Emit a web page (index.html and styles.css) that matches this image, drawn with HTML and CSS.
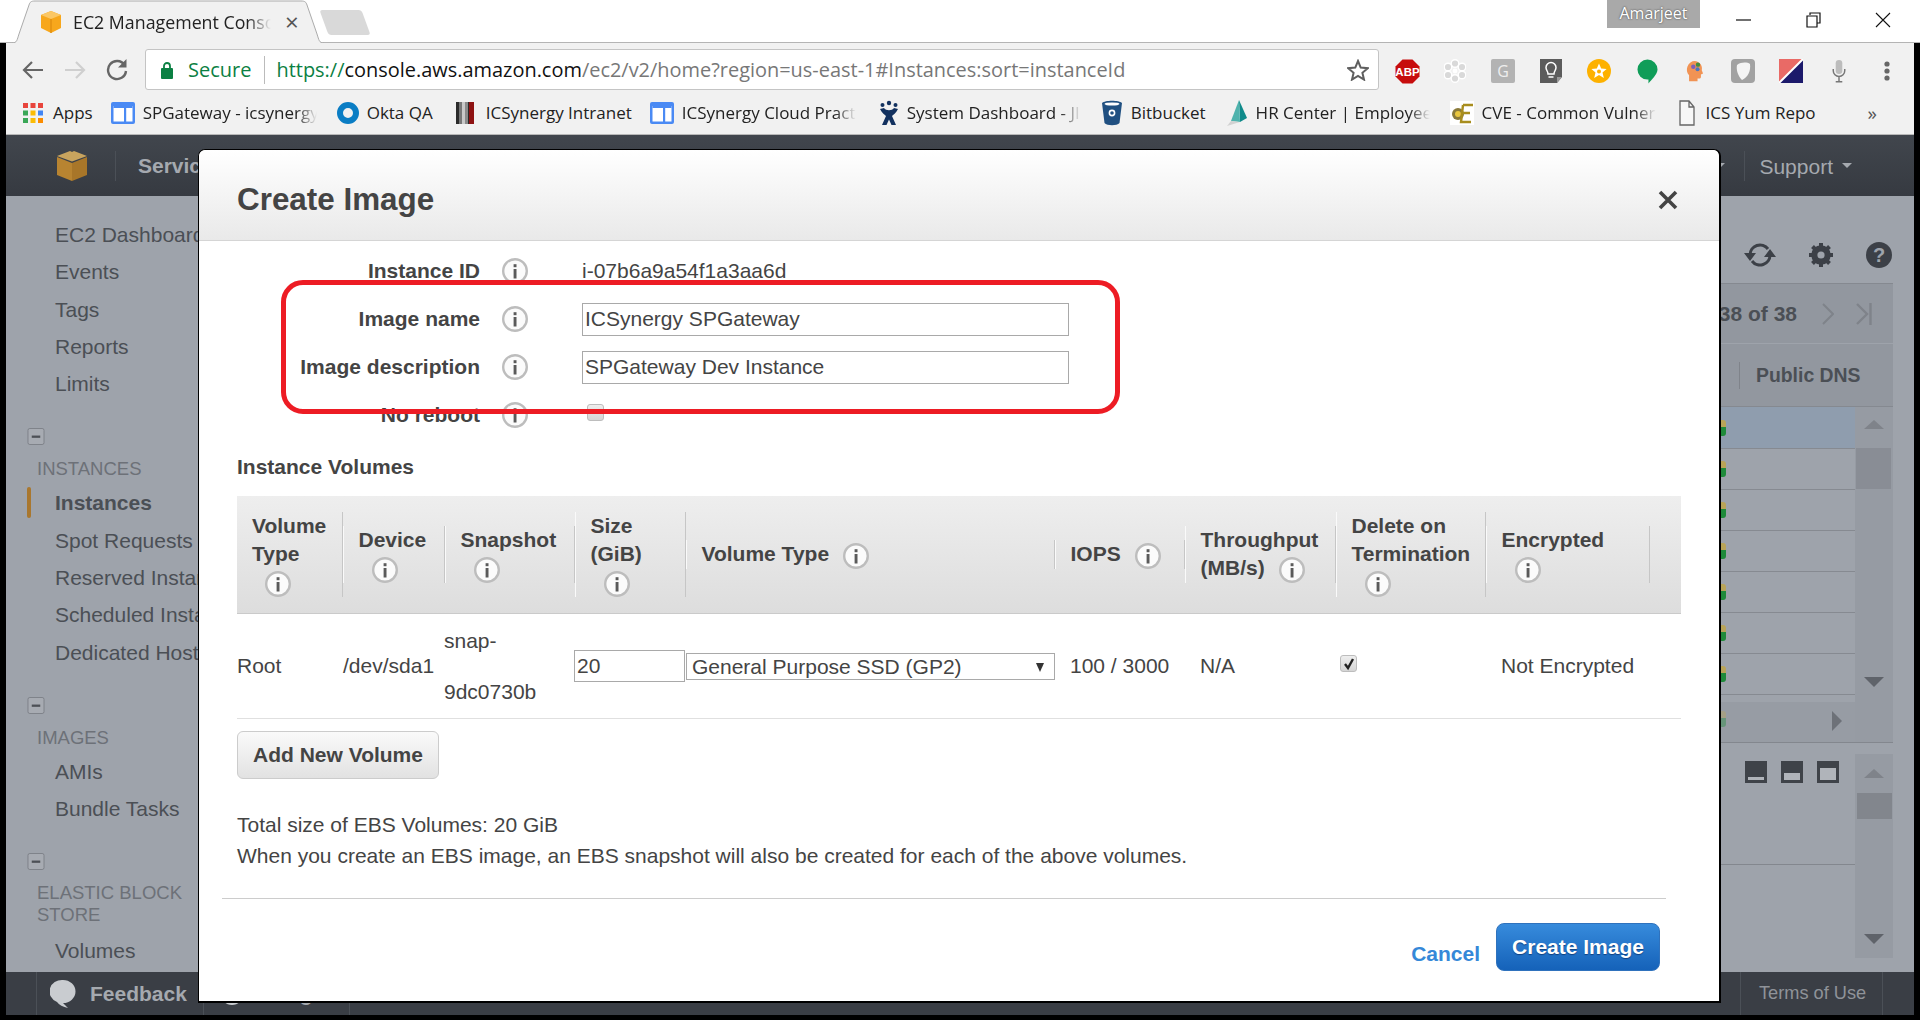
FILE: index.html
```html
<!DOCTYPE html>
<html lang="en">
<head>
    <meta charset="UTF-8">
    <meta name="viewport" content="width=device-width, initial-scale=1.0">
    <title>EC2 Management Console</title>
    <link rel="stylesheet" href="styles.css">
</head>
<body>

    <svg class="sprite" aria-hidden="true">
        <symbol id="info" viewBox="0 0 26 26">
            <circle cx="13" cy="13" r="11.8" fill="#fbfbfb" stroke="#bdbdbd" stroke-width="2.4"/>
            <rect x="11.6" y="11" width="2.9" height="9.5" fill="#5a5a5a"/>
            <rect x="11.6" y="6.2" width="2.9" height="3" fill="#5a5a5a"/>
        </symbol>
        <symbol id="doc" viewBox="0 0 24 24">
            <rect x="0" y="1" width="24" height="22" rx="2" fill="#4a8af4"/>
            <rect x="2.5" y="5" width="19" height="15.5" fill="#fff"/>
            <rect x="13" y="5" width="2.2" height="16" fill="#4a8af4"/>
            <rect x="2.5" y="5" width="19" height="2" fill="#4a8af4"/>
        </symbol>
        <symbol id="minus" viewBox="0 0 18 18">
            <rect x="0.5" y="0.5" width="17" height="17" rx="2" fill="#a7abb2" stroke="#7c8087"/>
            <rect x="4.5" y="8" width="9" height="2.4" fill="#4c5056"/>
        </symbol>
    </svg>

    <!-- browser chrome -->
    <div class="tabstrip">
        <div class="tab">
            <svg class="tab-shape" width="314" height="43" viewBox="0 0 314 43"><path d="M1 43 C6 43 6 40 8 34 L18 5 C19 2 20 1 24 1 L290 1 C294 1 295 2 296 5 L306 34 C308 40 308 43 313 43" fill="#f1f1f1" stroke="#ababab"/></svg>
            <svg class="tab-icon" width="22" height="22" viewBox="0 0 22 22"><path d="M11 0 L21 4 V17 L11 22 L1 17 V4 Z" fill="#f7a71c"/><path d="M1 4 L11 8 L21 4 L11 0 Z" fill="#fbc765"/><path d="M11 8 V22" stroke="#e08f10" stroke-width="1.4"/></svg>
            <span class="tab-title">EC2 Management Consol</span>
            <span class="tab-x">×</span>
        </div>
        <div class="newtab"></div>
        <div class="tab-gap"></div>
        <div class="user">Amarjeet</div>
        <div class="winctl">
            <svg width="16" height="16" viewBox="0 0 16 16"><path d="M0 8 H15" stroke="#111" stroke-width="1.2"/></svg>
            <svg width="16" height="16" viewBox="0 0 16 16"><path d="M4 3 V1 H14 V11 H11 M1 4 H11 V15 H1 Z" fill="none" stroke="#111" stroke-width="1.2"/></svg>
            <svg width="16" height="16" viewBox="0 0 16 16"><path d="M1 1 L15 15 M15 1 L1 15" stroke="#111" stroke-width="1.1"/></svg>
        </div>
    </div>

    <div class="frame">
        <div class="toolbar">
            <div class="navbtn"><svg width="22" height="20" viewBox="0 0 22 20"><path d="M21 10 H3 M10 2 L2 10 L10 18" fill="none" stroke="#666" stroke-width="2.2"/></svg></div>
            <div class="navbtn"><svg width="22" height="20" viewBox="0 0 22 20"><path d="M1 10 H19 M12 2 L20 10 L12 18" fill="none" stroke="#cfcfcf" stroke-width="2.2"/></svg></div>
            <div class="navbtn"><svg width="22" height="24" viewBox="0 0 22 24"><path d="M18.5 7 A9 9 0 1 0 20 13" fill="none" stroke="#666" stroke-width="2.4"/><path d="M20.5 1 V9.5 H12 Z" fill="#666"/></svg></div>
            <div class="omnibox">
                <svg class="lock" width="12" height="18" viewBox="0 0 12 18"><path d="M3 8 V5 A3 3 0 0 1 9 5 V8" fill="none" stroke="#0b8043" stroke-width="1.8"/><rect x="0" y="7" width="12" height="11" rx="1" fill="#0b8043"/></svg>
                <span class="secure">Secure</span>
                <span class="url"><span class="url-https">https://</span><span class="url-host">console.aws.amazon.com</span>/ec2/v2/home?region=us-east-1#Instances:sort=instanceId</span>
                <svg class="star" width="22" height="22" viewBox="0 0 22 22"><path d="M11 2 L13.7 8.6 L20.7 9.2 L15.4 13.8 L17 20.6 L11 17 L5 20.6 L6.6 13.8 L1.3 9.2 L8.3 8.6 Z" fill="none" stroke="#5f5f5f" stroke-width="2"/></svg>
            </div>
            <div class="exts">
                <div class="ext"><svg width="25" height="25" viewBox="0 0 25 25"><path d="M7.5 0.5 H17.5 L24.5 7.5 V17.5 L17.5 24.5 H7.5 L0.5 17.5 V7.5 Z" fill="#c70d0d"/><text x="12.5" y="16.8" text-anchor="middle" class="abp">ABP</text></svg></div>
                <div class="ext"><svg width="22" height="24" viewBox="0 0 22 24"><g fill="#d9d9d9" stroke="#fff" stroke-width="1.4"><circle cx="11" cy="4.5" r="3.8"/><circle cx="11" cy="19.5" r="3.8"/><circle cx="4" cy="8" r="3.8"/><circle cx="18" cy="8" r="3.8"/><circle cx="4" cy="16" r="3.8"/><circle cx="18" cy="16" r="3.8"/></g><circle cx="11" cy="12" r="2.4" fill="#fff"/></svg></div>
                <div class="ext"><div class="ext-g">G</div></div>
                <div class="ext"><svg width="24" height="24" viewBox="0 0 24 24"><path d="M1 0 H23 V18 L18 24 H1 Z" fill="#5c5c5c"/><path d="M23 18 H18 V24 Z" fill="#999"/><path d="M9 15 C9 12 7 11.5 7 8.5 A5 5 0 0 1 17 8.5 C17 11.5 15 12 15 15 Z M9.5 18 H14.5" fill="none" stroke="#fff" stroke-width="1.5"/></svg></div>
                <div class="ext"><svg width="24" height="24" viewBox="0 0 24 24"><circle cx="12" cy="12" r="12" fill="#fdb100"/><path d="M12 4.5 L14.2 9.6 L19.6 10 L15.5 13.6 L16.8 19 L12 16.1 L7.2 19 L8.5 13.6 L4.4 10 L9.8 9.6 Z" fill="#fff"/><circle cx="12" cy="12.5" r="2" fill="#fdb100"/></svg></div>
                <div class="ext"><svg width="21" height="25" viewBox="0 0 22 26"><path d="M11 0.5 A10.5 10.5 0 0 1 21.5 11 C21.5 16 15 22 12 25.5 V21.5 H11 A10.5 10.5 0 0 1 11 0.5 Z" fill="#0f9d58"/></svg></div>
                <div class="ext"><svg width="18" height="22" viewBox="0 0 20 26"><path d="M3 25 V18 C0 15 0 11 1 8 C3 2 9 0 13 2 C17 4 19 8 18 12 L19.5 16 L17 17 V20 C17 22 15 22 13 22 V25 Z" fill="#f19354"/><circle cx="8" cy="8" r="2.6" fill="#7b5fb8"/><circle cx="13.5" cy="5.5" r="2.6" fill="#3f8e3f"/><circle cx="13" cy="11" r="2.4" fill="#4a76c2"/></svg></div>
                <div class="ext"><svg width="24" height="24" viewBox="0 0 24 24"><rect width="24" height="24" rx="4" fill="#a2a2a2"/><path d="M6 6 C10 3 16 3 19 5 C20 12 17 18 11 21 C7 17 5 11 6 6 Z" fill="#f4f4f4"/></svg></div>
                <div class="ext"><svg width="24" height="24" viewBox="0 0 24 24"><rect width="24" height="24" fill="#e96a66"/><path d="M24 0 V24 H0 Z" fill="#1c1a6b"/><path d="M24 0 L0 24" stroke="#fff" stroke-width="2"/></svg></div>
                <div class="ext"><svg width="14" height="23" viewBox="0 0 16 28"><rect x="4" y="0" width="8" height="17" rx="4" fill="#bcbcbc"/><path d="M1 11 V13 A7 7 0 0 0 15 13 V11 M8 20 V26 M4 26.5 H12" fill="none" stroke="#777" stroke-width="1.8"/></svg></div>
                <div class="ext"><svg width="6" height="20" viewBox="0 0 6 20"><circle cx="3" cy="3" r="2.6" fill="#666"/><circle cx="3" cy="10" r="2.6" fill="#666"/><circle cx="3" cy="17" r="2.6" fill="#666"/></svg></div>
            </div>
        </div>

        <div class="bookmarks">
            <div class="bm bm-apps">
                <svg width="20" height="20" viewBox="0 0 20 20"><g><rect width="5" height="5" fill="#e8453c"/><rect x="7.5" width="5" height="5" fill="#e8453c"/><rect x="15" width="5" height="5" fill="#e8453c"/><rect y="7.5" width="5" height="5" fill="#3aa757"/><rect x="7.5" y="7.5" width="5" height="5" fill="#fbbc05"/><rect x="15" y="7.5" width="5" height="5" fill="#4285f4"/><rect y="15" width="5" height="5" fill="#3aa757"/><rect x="7.5" y="15" width="5" height="5" fill="#fbbc05"/><rect x="15" y="15" width="5" height="5" fill="#fb8c00"/></g></svg>
                <span>Apps</span>
            </div>
            <div class="bm"><svg width="24" height="24"><use href="#doc"/></svg><span class="bm-cut">SPGateway - icsynergy</span></div>
            <div class="bm"><svg width="22" height="24" viewBox="0 0 22 24"><circle cx="11" cy="12" r="8" fill="none" stroke="#0a7dc4" stroke-width="6"/></svg><span>Okta QA</span></div>
            <div class="bm bm-intranet"><svg width="18" height="22" viewBox="0 0 18 22"><rect width="18" height="22" fill="#2b2b2b"/><rect x="3" width="3" height="22" fill="#777"/><rect x="6" width="3" height="22" fill="#c9c9c9"/><rect x="9" width="3" height="22" fill="#8b8b8b"/><rect x="13" width="5" height="22" fill="#8e1212"/></svg><span>ICSynergy Intranet</span></div>
            <div class="bm bm-cloud"><svg width="24" height="24"><use href="#doc"/></svg><span class="bm-cut">ICSynergy Cloud Pract</span></div>
            <div class="bm bm-jira"><svg width="20" height="26" viewBox="0 0 20 26"><g fill="#12315f"><circle cx="10" cy="3" r="2.2"/><circle cx="3.5" cy="5" r="2"/><circle cx="16.5" cy="5" r="2"/><path d="M1 9 L5 8 C7 11 13 11 15 8 L19 9 C17 13 14 15 13 16 L17 25 H12.5 L10 19.5 L7.5 25 H3 L7 16 C6 15 3 13 1 9 Z"/></g></svg><span class="bm-cut">System Dashboard - JI</span></div>
            <div class="bm"><svg width="22" height="26" viewBox="0 0 22 26"><path d="M1 3 C4 0 18 0 21 3 L18.5 23 C16 26 6 26 3.5 23 Z" fill="#205081"/><ellipse cx="11" cy="4" rx="7.5" ry="1.6" fill="#fff"/><circle cx="11" cy="13" r="2.6" fill="none" stroke="#fff" stroke-width="1.6"/></svg><span>Bitbucket</span></div>
            <div class="bm"><svg width="22" height="26" viewBox="0 0 22 26"><path d="M13 0 L21 18 L14 22 Z" fill="#0f8a8a"/><path d="M13 0 L5 21 L14 22 Z" fill="#4fb3ad"/><path d="M5 21 L14 22 L1 26 Z" fill="#d2d2d2"/></svg><span class="bm-cut">HR Center | Employee</span></div>
            <div class="bm"><svg width="24" height="24" viewBox="0 0 24 24"><rect width="24" height="24" fill="#fff"/><circle cx="8" cy="13" r="6" fill="#8a7a3a"/><circle cx="8" cy="13" r="3" fill="#e9c63e"/><path d="M13 4 H23 M13 4 L11 21 H21 M12 12 H20" fill="none" stroke="#a88d1e" stroke-width="2.4"/></svg><span class="bm-cut">CVE - Common Vulner</span></div>
            <div class="bm bm-yum"><svg width="16" height="26" viewBox="0 0 16 26"><path d="M1 1 H10 L15 7 V25 H1 Z M10 1 V7 H15" fill="#f7f7f7" stroke="#666" stroke-width="1.3"/></svg><span>ICS Yum Repo</span></div>
            <div class="bm-more">»</div>
        </div>

        <!-- the console behind the dialog -->
        <div class="navbar">
            <svg class="nav-logo" width="30" height="30" viewBox="0 0 30 30"><path d="M0 6 L15 12 V30 L0 24 Z" fill="#b88431"/><path d="M30 6 L15 12 V30 L30 24 Z" fill="#a87629"/><path d="M0 5 L13 0 L15 1 L17 0 L30 5 L15 10.5 Z" fill="#c8a45e"/></svg>
            <div class="nav-sep"></div>
            <div class="nav-services">Services</div>
            <div class="nav-spacer"></div>
            <div class="nav-caret"></div>
            <div class="nav-sep nav-sep-support"></div>
            <div class="nav-support">Support</div>
            <div class="nav-caret"></div>
        </div>

        <div class="console">
            <div class="sidebar">
                <ul class="side-list">
                    <li>EC2 Dashboard</li>
                    <li>Events</li>
                    <li>Tags</li>
                    <li>Reports</li>
                    <li>Limits</li>
                </ul>
                <div class="side-group">
                    <svg width="18" height="18"><use href="#minus"/></svg>
                    <h4>INSTANCES</h4>
                    <ul class="side-list">
                        <li class="active">Instances</li>
                        <li>Spot Requests</li>
                        <li>Reserved Instances</li>
                        <li>Scheduled Instances</li>
                        <li>Dedicated Hosts</li>
                    </ul>
                </div>
                <div class="side-group">
                    <svg width="18" height="18"><use href="#minus"/></svg>
                    <h4>IMAGES</h4>
                    <ul class="side-list">
                        <li>AMIs</li>
                        <li>Bundle Tasks</li>
                    </ul>
                </div>
                <div class="side-group">
                    <svg width="18" height="18"><use href="#minus"/></svg>
                    <h4>ELASTIC BLOCK STORE</h4>
                    <ul class="side-list">
                        <li>Volumes</li>
                    </ul>
                </div>
            </div>

            <div class="main">
                <div class="actions">
                    <svg width="32" height="28" viewBox="0 0 32 28"><path d="M6 14 A10 10 0 0 1 24 8 M26 14 A10 10 0 0 1 8 20" fill="none" stroke="#3c4047" stroke-width="3"/><path d="M0 12 H12 L6 20 Z M32 16 H20 L26 8 Z" fill="#3c4047"/></svg>
                    <svg class="gear" width="24" height="24" viewBox="0 0 24 24"><circle cx="12" cy="12" r="7" fill="none" stroke="#3c4047" stroke-width="5.5"/><path d="M12 0 V24 M0 12 H24 M3.5 3.5 L20.5 20.5 M20.5 3.5 L3.5 20.5" stroke="#3c4047" stroke-width="4"/><circle cx="12" cy="12" r="3.6" fill="#9ea3ab"/></svg>
                    <svg width="26" height="26" viewBox="0 0 26 26"><circle cx="13" cy="13" r="13" fill="#3c4047"/><text x="13" y="20" text-anchor="middle" class="help">?</text></svg>
                </div>
                <div class="pager">
                    <span>1 to 38 of 38</span>
                    <svg width="12" height="22" viewBox="0 0 12 22"><path d="M1 1 L11 11 L1 21" fill="none" stroke="#7f838a" stroke-width="2"/></svg>
                    <svg width="16" height="22" viewBox="0 0 16 22"><path d="M1 1 L11 11 L1 21 M14.5 0 V22" fill="none" stroke="#7f838a" stroke-width="2.4"/></svg>
                </div>
                <div class="col-head">
                    <div class="col-sep"></div>
                    <span>Public DNS</span>
                </div>
                <div class="table-area">
                    <div class="rows">
                        <div class="row row-sel"><i class="status"></i></div>
                        <div class="row"><i class="status"></i></div>
                        <div class="row"><i class="status"></i></div>
                        <div class="row"><i class="status"></i></div>
                        <div class="row"><i class="status"></i></div>
                        <div class="row"><i class="status"></i></div>
                        <div class="row"><i class="status"></i></div>
                        <div class="hscroll">
                            <i class="status status-fade"></i>
                            <div class="tri-right"></div>
                        </div>
                    </div>
                    <div class="vscroll vscroll-top">
                        <div class="tri-up"></div>
                        <div class="thumb thumb-top"></div>
                        <div class="tri-down"></div>
                    </div>
                </div>
                <div class="pane">
                    <div class="pane-left">
                        <div class="pane-icons">
                            <div class="pane-ico"><i class="fill-1"></i></div>
                            <div class="pane-ico"><i class="fill-2"></i></div>
                            <div class="pane-ico"><i class="fill-3"></i></div>
                        </div>
                    </div>
                    <div class="vscroll vscroll-pane">
                        <div class="tri-up"></div>
                        <div class="thumb thumb-pane"></div>
                        <div class="tri-down"></div>
                    </div>
                </div>
            </div>
        </div>

        <div class="bottombar">
            <div class="bar-cell bar-feedback">
                <svg width="26" height="30" viewBox="0 0 26 30"><path d="M13 1 A12.5 11.5 0 0 1 13 24 L18 29 C13 28 9 26 7 23 A12.5 11.5 0 0 1 13 1 Z" fill="#c9ccd0"/></svg>
                <span>Feedback</span>
            </div>
            <div class="bar-cell bar-lang">
                <svg width="22" height="22" viewBox="0 0 22 22"><circle cx="11" cy="11" r="11" fill="#c9ccd0"/></svg>
                <span>English</span>
            </div>
            <div class="bar-spacer"></div>
            <div class="bar-cell bar-terms">Terms of Use</div>
        </div>
    </div>

    <!-- dialog -->
    <div class="modal">
        <div class="modal-head">
            <h2>Create Image</h2>
            <svg class="modal-x" width="20" height="20" viewBox="0 0 20 20"><path d="M2 2 L18 18 M18 2 L2 18" stroke="#444" stroke-width="3.6"/></svg>
        </div>

        <div class="modal-body">
            <div class="form">
                <label>Instance ID</label>
                <svg class="info" width="26" height="26"><use href="#info"/></svg>
                <div class="field">i-07b6a9a54f1a3aa6d</div>

                <label>Image name</label>
                <svg class="info" width="26" height="26"><use href="#info"/></svg>
                <div class="field"><input class="text-input" type="text" value="ICSynergy SPGateway"></div>

                <label>Image description</label>
                <svg class="info" width="26" height="26"><use href="#info"/></svg>
                <div class="field"><input class="text-input" type="text" value="SPGateway Dev Instance"></div>

                <label>No reboot</label>
                <svg class="info" width="26" height="26"><use href="#info"/></svg>
                <div class="field"><span class="check check-off"></span></div>
            </div>

            <h3>Instance Volumes</h3>

            <div class="vol-head">
                <div class="vh vh-first">Volume<br>Type<br><svg class="info info-line" width="26" height="26"><use href="#info"/></svg></div>
                <div class="vh">Device<br><svg class="info info-line" width="26" height="26"><use href="#info"/></svg></div>
                <div class="vh">Snapshot<br><svg class="info info-line" width="26" height="26"><use href="#info"/></svg></div>
                <div class="vh">Size<br>(GiB)<br><svg class="info info-line" width="26" height="26"><use href="#info"/></svg></div>
                <div class="vh">Volume Type <svg class="info" width="26" height="26"><use href="#info"/></svg></div>
                <div class="vh">IOPS <svg class="info" width="26" height="26"><use href="#info"/></svg></div>
                <div class="vh">Throughput<br>(MB/s) <svg class="info" width="26" height="26"><use href="#info"/></svg></div>
                <div class="vh">Delete on<br>Termination<br><svg class="info info-line" width="26" height="26"><use href="#info"/></svg></div>
                <div class="vh">Encrypted<br><svg class="info info-line" width="26" height="26"><use href="#info"/></svg></div>
                <div></div>
            </div>

            <div class="vol-row">
                <div>Root</div>
                <div>/dev/sda1</div>
                <div class="vc-tight vc-snap">snap-<br>9dc0730b</div>
                <div class="vc-tight"><input class="size-input" type="text" value="20"></div>
                <div class="select-wrap"><select class="vol-select"><option>General Purpose SSD (GP2)</option></select></div>
                <div class="vc-pad">100 / 3000</div>
                <div class="vc-pad">N/A</div>
                <div class="vc-check"><span class="check check-on"><svg width="14" height="14" viewBox="0 0 14 14"><path d="M3 7 L6 11 L11 2" fill="none" stroke="#222" stroke-width="2.4"/></svg></span></div>
                <div class="vc-pad">Not Encrypted</div>
                <div></div>
            </div>

            <button class="btn-add" type="button">Add New Volume</button>

            <p class="note note-first">Total size of EBS Volumes: 20 GiB</p>
            <p class="note">When you create an EBS image, an EBS snapshot will also be created for each of the above volumes.</p>

            <div class="modal-foot">
                <a class="cancel">Cancel</a>
                <button class="btn-primary" type="button">Create Image</button>
            </div>
        </div>

        <div class="annotation"></div>
    </div>

</body>
</html>
```

FILE: styles.css
```css
* {
    box-sizing: border-box;
}

html, body {
    margin: 0;
    padding: 0;
}

body {
    position: relative;
    width: 1920px;
    height: 1020px;
    overflow: hidden;
    background: #000;
    font-family: 'Liberation Sans', Arial, sans-serif;
    font-size: 21px;
    color: #444;
}

.sprite {
    display: none;
}

/* browser chrome */
.tabstrip {
    display: flex;
    height: 43px;
    background: #fff;
    border-bottom: 1px solid #b4b4b4;
}

.tab {
    position: relative;
    width: 314px;
    height: 43px;
    margin-left: 11px;
    display: flex;
    align-items: center;
    padding-left: 29px;
    flex: none;
}

.tab-shape {
    position: absolute;
    left: 0;
    top: 0;
}

.tab-icon, .tab-title, .tab-x {
    position: relative;
}

.tab-title {
    width: 198px;
    margin-left: 11px;
    font-family: 'Open Sans', sans-serif;
    font-size: 17.8px;
    color: #222;
    white-space: nowrap;
    overflow: hidden;
    -webkit-mask-image: linear-gradient(to right, #000 88%, transparent);
    mask-image: linear-gradient(to right, #000 88%, transparent);
}

.tab-x {
    margin-left: 14px;
    font-family: 'Open Sans', sans-serif;
    font-size: 24px;
    line-height: 24px;
    color: #555;
}

.newtab {
    width: 42px;
    height: 25px;
    margin: 10px 0 0 -1px;
    background: #d9d9d9;
    border-radius: 3px;
    transform: skewX(20deg);
    flex: none;
}

.tab-gap {
    flex: 1;
}

.user {
    width: 93px;
    height: 28px;
    background: #a9a9a9;
    color: #fff;
    font-family: 'Open Sans', sans-serif;
    font-size: 16px;
    line-height: 26px;
    text-align: center;
    text-shadow: 0 0 2px #333;
    flex: none;
}

.winctl {
    display: flex;
    width: 220px;
    height: 28px;
    padding: 12px 29px 0 36px;
    justify-content: space-between;
    flex: none;
}

.frame {
    margin: 0 6px;
    width: 1908px;
}

.toolbar {
    display: flex;
    align-items: center;
    height: 48px;
    padding: 5px 0 0 6px;
    background: #f1f1f1;
}

.navbtn {
    width: 42px;
    display: flex;
    justify-content: center;
    flex: none;
}

.omnibox {
    display: flex;
    align-items: center;
    width: 1234px;
    height: 41px;
    margin-left: 7px;
    padding-left: 15px;
    background: #fff;
    border: 1px solid #c4c4c4;
    border-radius: 3px;
    font-family: 'Open Sans', sans-serif;
    flex: none;
}

.secure {
    margin-left: 15px;
    padding-right: 13px;
    border-right: 1px solid #bbb;
    font-size: 20px;
    line-height: 28px;
    color: #0b8043;
}

.url {
    margin-left: 11px;
    font-size: 19.95px;
    color: #777;
    white-space: nowrap;
}

.url-https {
    color: #0b8043;
}

.url-host {
    color: #111;
}

.star {
    margin-left: auto;
    margin-right: 9px;
}

.exts {
    display: flex;
    margin-left: 4px;
    padding-top: 3px;
}

.ext {
    width: 48px;
    display: flex;
    justify-content: center;
    align-items: center;
}

.abp {
    font-family: 'Liberation Sans', sans-serif;
    font-size: 11.5px;
    font-weight: bold;
    fill: #fff;
}

.help {
    font-family: 'Liberation Sans', sans-serif;
    font-size: 20px;
    font-weight: bold;
    fill: #9ea3ab;
}

.ext-g {
    width: 24px;
    height: 24px;
    background: #b3b3b3;
    color: #eee;
    border-radius: 2px;
    font-family: 'Open Sans', sans-serif;
    font-size: 16px;
    line-height: 24px;
    text-align: center;
}

.bookmarks {
    display: flex;
    align-items: center;
    gap: 20px;
    height: 44px;
    padding-left: 17px;
    background: #f1f1f1;
    border-bottom: 1px solid #b8b8b8;
    font-family: 'Open Sans', sans-serif;
    font-size: 17px;
    color: #222;
}

.bm {
    display: flex;
    align-items: center;
    gap: 8px;
    white-space: nowrap;
    flex: none;
}

.bm-apps {
    gap: 10px;
    margin-right: -2px;
}

.bm-intranet {
    gap: 12px;
    margin-left: 3px;
}

.bm-cloud {
    margin-left: -2px;
}

.bm-jira {
    margin-left: 3px;
}

.bm-yum {
    gap: 11px;
    margin-left: 3px;
}

.bm-cut {
    width: 174px;
    overflow: hidden;
    -webkit-mask-image: linear-gradient(to right, #000 88%, transparent);
    mask-image: linear-gradient(to right, #000 88%, transparent);
}

.bm-more {
    margin-left: 32px;
    font-size: 19px;
    color: #555;
}

/* console behind the dialog */
.navbar {
    display: flex;
    align-items: center;
    height: 61px;
    padding-left: 51px;
    background: linear-gradient(#41464d, #363a41);
    color: #a5a9af;
}

.nav-sep {
    width: 1px;
    height: 30px;
    margin-left: 28px;
    background: #4b5057;
}

.nav-services {
    margin-left: 22px;
    font-weight: bold;
}

.nav-spacer {
    flex: 1;
}

.nav-caret {
    width: 0;
    height: 0;
    margin-left: 9px;
    border: 5px solid transparent;
    border-top: 5px solid #a5a9af;
    border-bottom: 0;
}

.nav-sep-support {
    margin-left: 19px;
}

.nav-support {
    margin: 3px 0 0 14px;
}

.navbar > .nav-caret:last-child {
    margin-right: 62px;
}

.console {
    display: flex;
    height: 776px;
    background: #9ea3ab;
    color: #4b4f55;
}

.sidebar {
    position: relative;
    width: 230px;
    padding: 20px 0 0 49px;
    flex: none;
}

.side-list {
    margin: 0;
    padding: 0;
    list-style: none;
}

.side-list li {
    height: 37.3px;
    line-height: 37.3px;
    white-space: nowrap;
}

.side-list li.active {
    position: relative;
    font-weight: bold;
}

.side-list li.active::before {
    content: "";
    position: absolute;
    left: -28px;
    top: 3px;
    width: 4px;
    height: 31px;
    border-radius: 2px;
    background: #a9772e;
}

.side-group {
    margin: 26px 0 0 -28px;
}

.side-group:last-child {
    margin-top: 25px;
}

.side-group > svg {
    display: block;
    height: 17px;
}

.side-group h4 {
    margin: 13px 0 4px 10px;
    width: 160px;
    font-size: 18.5px;
    font-weight: normal;
    line-height: 22px;
    color: #6d7178;
}

.side-group:last-child h4 {
    margin: 12px 0 6px 10px;
}

.side-group .side-list {
    margin-left: 28px;
}

.main {
    flex: 1;
    padding-right: 21px;
}

.actions {
    display: flex;
    align-items: center;
    justify-content: flex-end;
    gap: 32px;
    height: 87px;
    padding: 30px 1px 0 0;
}

.actions .gear {
    margin-left: 1px;
    margin-right: 1px;
}

.pager {
    display: flex;
    align-items: center;
    justify-content: flex-end;
    height: 61px;
    padding-right: 21px;
    background: #92979f;
    border-top: 1px solid #858990;
    border-bottom: 1px solid #9ea3ab;
    font-weight: bold;
    font-size: 21px;
    color: #4b4f55;
}

.pager span {
    margin-right: 25px;
}

.pager svg + svg {
    margin-left: 22px;
}

.col-head {
    display: flex;
    align-items: center;
    height: 63px;
    padding-left: 1503px;
    background: #92979f;
    border-bottom: 1px solid #858990;
    font-weight: bold;
    font-size: 19.4px;
}

.col-sep {
    width: 1px;
    height: 27px;
    margin-right: 16px;
    background: #7f838a;
}

.table-area {
    display: flex;
    height: 336px;
    border-bottom: 1px solid #83878e;
}

.rows {
    flex: 1;
}

.row {
    display: flex;
    align-items: center;
    justify-content: flex-end;
    height: 41px;
    padding-right: 129px;
    border-bottom: 1px solid #868a91;
}

.row-sel {
    height: 42px;
    background: #8f9dae;
}

.hscroll {
    position: relative;
    display: flex;
    align-items: center;
    justify-content: flex-end;
    height: 47px;
    padding: 0 129px 0 0;
    background: linear-gradient(#9ea3ab 7px, #979ca4 7px);
}

.tri-right {
    position: absolute;
    right: 13px;
    top: 16px;
    border: 10px solid transparent;
    border-left: 10px solid #6d7178;
    border-right: 0;
}

.status {
    display: block;
    width: 16px;
    height: 16px;
    border-radius: 3px;
    background: linear-gradient(#b9a458 45%, #1f8a3a 45%);
}

.status-fade {
    opacity: 0.4;
}

.vscroll {
    position: relative;
    width: 38px;
    background: #969ba3;
    flex: none;
}

.tri-up, .tri-down {
    position: absolute;
    left: 9px;
    border: 10px solid transparent;
}

.tri-up {
    border-bottom: 9px solid #7f838a;
    border-top: 0;
}

.tri-down {
    border-top: 10px solid #5f636a;
    border-bottom: 0;
}

.thumb {
    position: absolute;
    left: 1px;
    width: 35px;
    background: #898d95;
}

.vscroll-top .tri-up {
    top: 13px;
}

.vscroll-top .tri-down {
    top: 270px;
}

.thumb-top {
    top: 41px;
    height: 41px;
}

.pane {
    display: flex;
    height: 229px;
}

.pane-left {
    flex: 1;
    height: 122px;
    border-bottom: 1px solid #83878e;
}

.pane-icons {
    display: flex;
    justify-content: flex-end;
    gap: 14px;
    padding: 18px 16px 0 0;
}

.pane-ico {
    position: relative;
    width: 22px;
    height: 22px;
    background: #3f4349;
}

.pane-ico i {
    position: absolute;
    left: 3px;
    right: 3px;
    bottom: 3px;
    background: #b0b4ba;
}

.fill-1 {
    height: 3px;
}

.fill-2 {
    height: 7px;
}

.fill-3 {
    height: 12px;
}

.vscroll-pane {
    height: 204px;
    margin-top: 11px;
}

.vscroll-pane .tri-up {
    top: 15px;
}

.vscroll-pane .tri-down {
    top: 180px;
}

.thumb-pane {
    top: 39px;
    left: 2px;
    height: 26px;
    background: #82868d;
}

.bottombar {
    display: flex;
    align-items: center;
    height: 43px;
    background: #3a3e45;
    color: #a5a9af;
    font-weight: bold;
}

.bar-cell {
    display: flex;
    align-items: center;
    height: 43px;
    border-left: 1px solid #4b5057;
}

.bar-feedback {
    gap: 14px;
    width: 167px;
    margin-left: 30px;
    padding-left: 13px;
}

.bar-lang {
    gap: 30px;
    width: 147px;
    padding-left: 17px;
    border-right: 1px solid #4b5057;
}

.bar-spacer {
    flex: 1;
}

.bar-terms {
    width: 143px;
    padding-left: 18px;
    margin-right: 31px;
    border-right: 1px solid #4b5057;
    font-size: 18.2px;
    font-weight: normal;
    color: #8f9399;
}

/* dialog */
.modal {
    position: absolute;
    left: 198px;
    top: 149px;
    width: 1523px;
    height: 854px;
    background: #fff;
    border: 1px solid #000;
    border-width: 1px 2px 2px 1px;
    border-radius: 7px 7px 0 0;
}

.modal-head {
    display: flex;
    align-items: center;
    justify-content: space-between;
    height: 91px;
    padding: 10px 41px 0 38px;
    background: linear-gradient(#fff, #e9e9e9);
    border-bottom: 1px solid #d5d5d5;
    border-radius: 7px 7px 0 0;
}

.modal-head h2 {
    margin: 0;
    font-size: 31.4px;
    font-weight: bold;
    color: #444;
}

.modal-body {
    padding: 6px 38px 0;
}

.form {
    display: grid;
    grid-template-columns: 243px 26px 1fr;
    grid-auto-rows: 48px;
    column-gap: 22px;
    align-items: center;
}

.form label {
    text-align: right;
    font-weight: bold;
}

.form .info {
    display: block;
}

.field {
    margin-left: 32px;
}

.text-input {
    display: block;
    width: 487px;
    height: 33px;
    padding: 0 2px;
    border: 1px solid #a9a9a9;
    font-family: inherit;
    font-size: 21px;
    color: #444;
    outline: none;
}

.check {
    display: block;
    width: 17px;
    height: 17px;
    border: 1px solid #bdbdbd;
    border-radius: 3px;
    background: linear-gradient(#eee, #d5d5d5);
}

.check-off {
    margin-left: 5px;
    transform: translateY(-3px);
}

.check-on svg {
    display: block;
    margin: 1px 0 0 1px;
}

.modal-body h3 {
    margin: 13px 0 14px;
    font-size: 21px;
    line-height: 30px;
    font-weight: bold;
}

.vol-head, .vol-row {
    display: grid;
    grid-template-columns: 106px 102px 130px 111px 369px 130px 151px 150px 164px 32px;
    align-items: center;
}

.vol-head {
    height: 118px;
    background: linear-gradient(#eeeeee, #dddddd);
    border-bottom: 1px solid #cacaca;
    font-weight: bold;
    line-height: 28px;
}

.vh {
    padding-left: 14.5px;
    border-left: 1px solid #fafafa;
    border-right: 1px solid #c6c6c6;
    white-space: nowrap;
}

.vh-first {
    padding-left: 15px;
    border-left: 0;
}

.vh .info {
    margin-left: 8px;
    vertical-align: middle;
}

.vh .info-line {
    margin-left: 13px;
}

.vol-row {
    height: 105px;
    border-bottom: 1px solid #e0e0e0;
}

.vc-tight {
    margin-left: -1px;
}

.vc-snap {
    line-height: 51px;
}

.vc-pad {
    padding-left: 15px;
}

.vc-check {
    padding-left: 4px;
    margin-top: -5px;
}

.size-input {
    display: block;
    width: 111px;
    height: 32px;
    padding: 0 2px;
    border: 1px solid #a9a9a9;
    font-family: inherit;
    font-size: 21px;
    color: #444;
    outline: none;
}

.select-wrap {
    position: relative;
}

.select-wrap::after {
    content: "";
    position: absolute;
    right: 11px;
    top: 10px;
    border: 4px solid transparent;
    border-top: 9px solid #333;
    border-bottom: 0;
}

.vol-select {
    display: block;
    width: 369px;
    height: 27px;
    padding: 0 0 0 5px;
    border: 1px solid #a9a9a9;
    border-radius: 0;
    background: #fff;
    appearance: none;
    font-family: inherit;
    font-size: 21px;
    color: #444;
    outline: none;
}

.btn-add {
    display: block;
    width: 202px;
    height: 48px;
    margin-top: 12px;
    padding: 0;
    background: linear-gradient(#fafafa, #e2e2e2);
    border: 1px solid #ccc;
    border-radius: 6px;
    font-family: inherit;
    font-size: 21px;
    font-weight: bold;
    color: #444;
}

.note {
    margin: 0;
    line-height: 31px;
}

.note-first {
    margin-top: 30px;
}

.modal-foot {
    display: flex;
    justify-content: flex-end;
    margin: 27px 15px 0 -15px;
    padding: 24px 6px 0 0;
    border-top: 1px solid #ccc;
}

.cancel {
    margin: 19px 16px 0 0;
    font-weight: bold;
    color: #3588d8;
}

.btn-primary {
    width: 164px;
    height: 48px;
    padding: 0;
    background: linear-gradient(#378bdc, #1562b9);
    border: 1px solid #2f72bd;
    border-radius: 8px;
    font-family: inherit;
    font-size: 21px;
    font-weight: bold;
    color: #fff;
    text-shadow: 0 1px 1px #12407f;
}

.annotation {
    position: absolute;
    left: 82px;
    top: 130px;
    width: 839px;
    height: 134px;
    border: 5px solid #ed1c24;
    border-radius: 22px;
}
```
